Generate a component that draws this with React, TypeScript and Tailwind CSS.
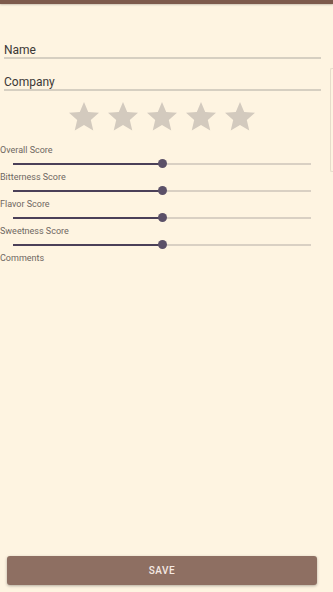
import * as React from 'react';

const STAR_PATH = 'M12 17.27L18.18 21l-1.64-7.03L22 9.24l-7.19-.61L12 2 9.19 8.63 2 9.24l5.46 4.73L5.82 21z';

const scores = ['Overall Score', 'Bitterness Score', 'Flavor Score', 'Sweetness Score'];

const TextField: React.FC<{ label: string; className?: string }> = ({ label, className }) => (
  <div className={`ml-[4px] mr-[12px] border-b-2 border-[#d6cfc1] ${className ?? ''}`}>
    <div className="text-[12px] leading-[14px] text-[#3b3836]">{label}</div>
  </div>
);

const ScoreSlider: React.FC<{ label: string; value: number }> = ({ label, value }) => (
  <div>
    <div className="text-[9px] leading-[10px] text-[#6e6762]">{label}</div>
    <div className="h-[17px] flex items-center ml-[13px] mr-[22px]">
      <div className="relative w-full h-[2px] bg-[#d9d0c3]">
        <div className="absolute left-0 top-0 h-[2px] bg-[#4b4058]" style={{ width: `${value}%` }} />
        <div
          className="absolute top-1/2 w-[9px] h-[9px] -mt-[4.5px] -ml-[4.5px] rounded-full bg-[#5b5068]"
          style={{ left: `${value}%` }}
        />
      </div>
    </div>
  </div>
);

const App: React.FC = () => {
  return (
    <div
      className="relative w-full h-[592px] bg-[#fef4e1] flex flex-col overflow-hidden"
      style={{ fontFamily: 'Roboto, "Noto Sans", sans-serif' }}
    >
      <div className="h-[4px] bg-[#7d5a4c] shadow-[0_1px_2px_rgba(0,0,0,0.2)]" />

      <TextField label="Name" className="mt-[39px]" />
      <TextField label="Company" className="mt-[16px]" />

      <div className="w-[324px] flex justify-center gap-[3px] mt-[8px]">
        {[0, 1, 2, 3, 4].map((i) => (
          <svg key={i} width="36" height="36" viewBox="0 0 24 24" className="shrink-0">
            <path d={STAR_PATH} fill="#d3cabe" />
          </svg>
        ))}
      </div>

      <div className="mt-[10px]">
        {scores.map((s) => (
          <ScoreSlider key={s} label={s} value={50} />
        ))}
        <div className="text-[9px] leading-[10px] text-[#6e6762]">Comments</div>
      </div>

      <div className="mt-auto mb-[7px] ml-[7px] mr-[16px] h-[29px] rounded-[3px] bg-[#8e6f62] shadow-[0_1px_3px_rgba(0,0,0,0.3)] flex items-center justify-center">
        <span className="text-[10px] font-medium tracking-[0.5px] text-[#f5e9e3]">SAVE</span>
      </div>

      <div className="absolute right-0 top-[68px] w-[3px] h-[104px] rounded-l-[2px] border border-r-0 border-[#e6dccb]" />
    </div>
  );
};

export default App;
